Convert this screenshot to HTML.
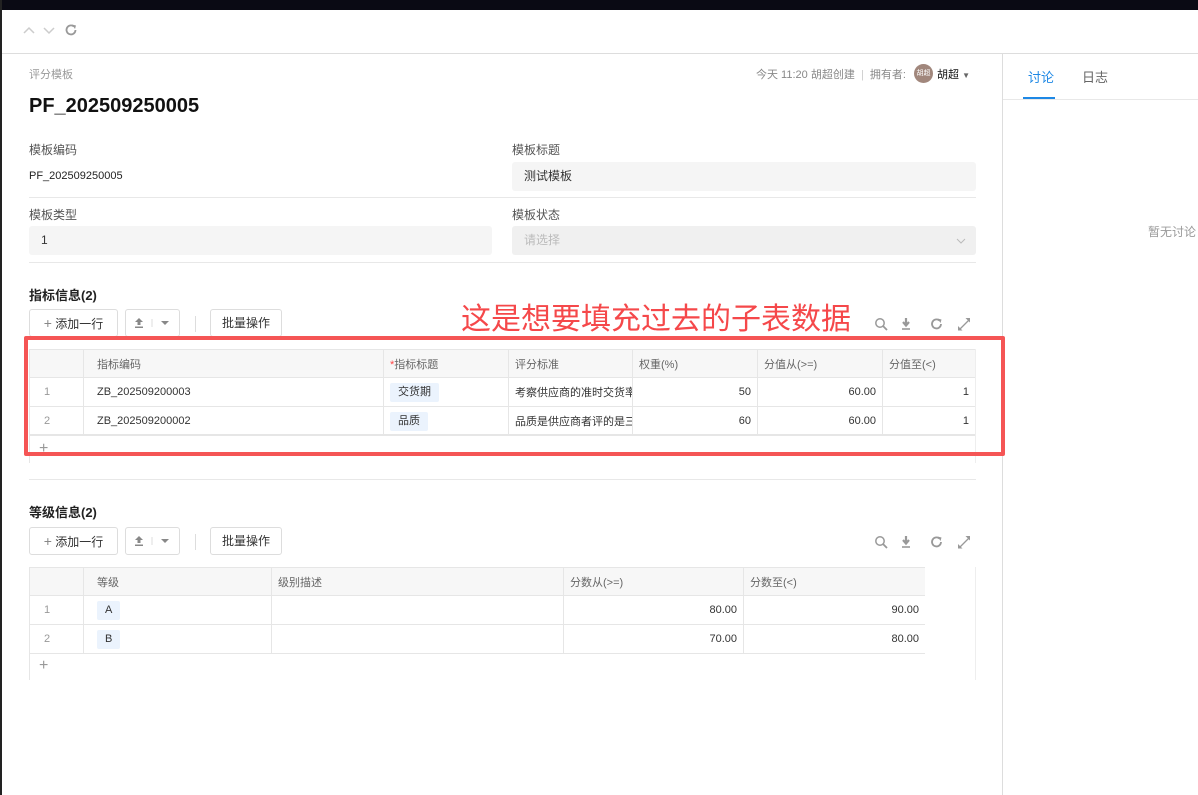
<!DOCTYPE html>
<html><head><meta charset="utf-8"><style>
*{box-sizing:border-box;margin:0;padding:0}
body{width:1198px;height:795px;overflow:hidden;background:#fff;font-family:"Liberation Sans","Noto Sans CJK SC",sans-serif;font-size:12px;color:#333;position:relative}
.a{position:absolute;white-space:nowrap}
.lab{color:#555;font-size:12px}
.inp{position:absolute;background:#f5f5f5;border-radius:3px;height:29px;line-height:29px;padding-left:12px;font-size:12px}
.btn{position:absolute;border:1px solid #ddd;border-radius:3px;height:28px;line-height:26px;text-align:center;font-size:12px;color:#333;background:#fff}
.hl{position:absolute;height:1px;background:#e8e8e8}
.wrap{position:absolute;overflow:hidden}
table{border-collapse:collapse;font-size:11px;table-layout:fixed}
td{border:1px solid #e6e6e6;height:29px;padding:0 6px;white-space:nowrap;overflow:hidden}
tr.h td{background:#f7f7f7;color:#666;height:28px}
.tag{display:inline-block;background:#ebf3fd;padding:0 8px;height:19px;line-height:19px;border-radius:2px}
.r{text-align:right}
.ic{position:absolute}
</style></head><body>
<div class="a" style="left:0;top:0;width:1198px;height:10px;background:#0a0a14"></div>
<div class="a" style="left:0;top:0;width:2px;height:795px;background:#222"></div>
<svg class="a" style="left:22px;top:24px" width="36" height="12" viewBox="0 0 36 12"><path d="M2 9L7 4 12 9" fill="none" stroke="#ccc" stroke-width="1.5"/><path d="M22 4L27 9 32 4" fill="none" stroke="#ccc" stroke-width="1.5"/></svg>
<svg class="a" style="left:64px;top:23px" width="14" height="14" viewBox="0 0 14 14"><path d="M11.5 7A4.5 4.5 0 1 1 9.8 3.4" fill="none" stroke="#999" stroke-width="1.8"/><path d="M8 1.5L12 2.5 11 6z" fill="#999"/></svg>
<div class="hl" style="left:2px;top:53px;width:1196px;background:#ddd"></div>
<div class="a" style="left:1002px;top:53px;width:1px;height:742px;background:#ddd"></div>
<div class="a" style="left:1028px;top:67px;color:#1e88e5;font-size:13px">讨论</div>
<div class="a" style="left:1082px;top:67px;color:#666;font-size:13px">日志</div>
<div class="a" style="left:1023px;top:97px;width:32px;height:2px;background:#1e88e5"></div>
<div class="hl" style="left:1003px;top:99px;width:195px;background:#e8e8e8"></div>
<div class="a" style="left:1148px;top:223px;color:#999">暂无讨论</div>

<div class="a" style="left:29px;top:66px;color:#999;font-size:11px">评分模板</div>
<div class="a" style="left:756px;top:66px;color:#888;font-size:11px">今天 11:20 胡超创建 &nbsp;<span style="color:#ccc">|</span>&nbsp; 拥有者:</div>
<div class="a" style="left:914px;top:64px;width:19px;height:19px;border-radius:50%;background:#a1877c;color:#fff;font-size:7px;line-height:19px;text-align:center">胡超</div>
<div class="a" style="left:937px;top:66px;color:#111;font-size:11px">胡超 <span style="font-size:8px;color:#666">▼</span></div>
<div class="a" style="left:29px;top:95px;font-size:20px;font-weight:bold;color:#111">PF_202509250005</div>

<div class="a lab" style="left:29px;top:141px">模板编码</div>
<div class="a" style="left:29px;top:170px;font-size:11px;color:#222">PF_202509250005</div>
<div class="a lab" style="left:512px;top:141px">模板标题</div>
<div class="inp" style="left:512px;top:162px;width:464px">测试模板</div>
<div class="hl" style="left:29px;top:197px;width:947px"></div>
<div class="a lab" style="left:29px;top:206px">模板类型</div>
<div class="inp" style="left:29px;top:226px;width:463px">1</div>
<div class="a lab" style="left:512px;top:206px">模板状态</div>
<div class="inp" style="left:512px;top:226px;width:464px;background:#f0f0f0;color:#bbb">请选择<svg style="position:absolute;right:10px;top:12px" width="10" height="6" viewBox="0 0 10 6"><path d="M1 1L5 5 9 1" fill="none" stroke="#bbb"/></svg></div>
<div class="hl" style="left:29px;top:262px;width:947px"></div>

<div class="a" style="left:29px;top:285px;font-weight:bold;font-size:13px;color:#222">指标信息(2)</div>
<div class="btn" style="left:29px;top:309px;width:89px"><span style="color:#888;font-size:14px">+</span> 添加一行</div>
<div class="btn" style="left:125px;top:309px;width:55px"><svg style="margin-top:8px" width="40" height="10" viewBox="0 0 40 10"><path d="M6 0L10 4H7.5V7H4.5V4H2z M2 8.5H10V10H2z" fill="#888"/><path d="M19 1V9" stroke="#ddd"/><path d="M28 3H36L32 7z" fill="#888"/></svg></div>
<div class="a" style="left:195px;top:316px;width:1px;height:16px;background:#ddd"></div>
<div class="btn" style="left:210px;top:309px;width:72px">批量操作</div>
<div class="a" style="left:461px;top:294px;color:#f5484a;font-size:30px">这是想要填充过去的子表数据</div>
<svg class="ic" style="left:874px;top:317px" width="100" height="14" viewBox="0 0 100 14"><circle cx="6" cy="6" r="4.2" fill="none" stroke="#999" stroke-width="1.5"/><path d="M9 9L13 13" stroke="#999" stroke-width="1.8"/><path d="M32 1V7M29 5L32 8.5 35 5" fill="none" stroke="#999" stroke-width="2.2"/><path d="M28 12H36" stroke="#999" stroke-width="1.6"/><path d="M67 7A4.5 4.5 0 1 1 65.3 3.4" fill="none" stroke="#999" stroke-width="1.8"/><path d="M63.5 1.5L67.5 2.5 66.5 6z" fill="#999"/><path d="M85 13L90 8M95 3L90 8" stroke="#999" stroke-width="1.3"/><path d="M84 9V13.5H88.5z M96 1H91.5L96 5.5z" fill="#999"/></svg>
<div class="wrap" style="left:29px;top:349px;width:947px;height:115px">
<table style="width:980px">
<colgroup><col style="width:54px"><col style="width:300px"><col style="width:125px"><col style="width:124px"><col style="width:125px"><col style="width:125px"><col style="width:127px"></colgroup>
<tr class="h"><td></td><td style="padding-left:13px">指标编码</td><td><span style="color:#f44">*</span>指标标题</td><td>评分标准</td><td>权重(%)</td><td>分值从(>=)</td><td>分值至(<)</td></tr>
<tr><td style="color:#999;padding-left:14px">1</td><td style="padding-left:13px">ZB_202509200003</td><td><span class="tag">交货期</span></td><td style="text-overflow:clip">考察供应商的准时交货率</td><td class="r">50</td><td class="r">60.00</td><td class="r" style="padding-right:40px">1</td></tr>
<tr><td style="color:#999;padding-left:14px">2</td><td style="padding-left:13px">ZB_202509200002</td><td><span class="tag">品质</span></td><td>品质是供应商者评的是三</td><td class="r">60</td><td class="r">60.00</td><td class="r" style="padding-right:40px">1</td></tr>
</table>
</div>
<div class="hl" style="left:29px;top:434px;width:947px;background:#e6e6e6"></div>
<div class="a" style="left:29px;top:434px;width:1px;height:29px;background:#e6e6e6"></div>
<div class="a" style="left:39px;top:440px;color:#999;font-size:16px">+</div>
<div class="a" style="left:975px;top:349px;width:1px;height:114px;background:#eee"></div>
<div class="a" style="left:24px;top:336px;width:981px;height:120px;border:4px solid #f55555;border-radius:2px"></div>
<div class="hl" style="left:29px;top:479px;width:947px"></div>

<div class="a" style="left:29px;top:502px;font-weight:bold;font-size:13px;color:#222">等级信息(2)</div>
<div class="btn" style="left:29px;top:527px;width:89px"><span style="color:#888;font-size:14px">+</span> 添加一行</div>
<div class="btn" style="left:125px;top:527px;width:55px"><svg style="margin-top:8px" width="40" height="10" viewBox="0 0 40 10"><path d="M6 0L10 4H7.5V7H4.5V4H2z M2 8.5H10V10H2z" fill="#888"/><path d="M19 1V9" stroke="#ddd"/><path d="M28 3H36L32 7z" fill="#888"/></svg></div>
<div class="a" style="left:195px;top:534px;width:1px;height:16px;background:#ddd"></div>
<div class="btn" style="left:210px;top:527px;width:72px">批量操作</div>
<svg class="ic" style="left:874px;top:535px" width="100" height="14" viewBox="0 0 100 14"><circle cx="6" cy="6" r="4.2" fill="none" stroke="#999" stroke-width="1.5"/><path d="M9 9L13 13" stroke="#999" stroke-width="1.8"/><path d="M32 1V7M29 5L32 8.5 35 5" fill="none" stroke="#999" stroke-width="2.2"/><path d="M28 12H36" stroke="#999" stroke-width="1.6"/><path d="M67 7A4.5 4.5 0 1 1 65.3 3.4" fill="none" stroke="#999" stroke-width="1.8"/><path d="M63.5 1.5L67.5 2.5 66.5 6z" fill="#999"/><path d="M85 13L90 8M95 3L90 8" stroke="#999" stroke-width="1.3"/><path d="M84 9V13.5H88.5z M96 1H91.5L96 5.5z" fill="#999"/></svg>
<div class="wrap" style="left:29px;top:567px;width:896px;height:90px">
<table style="width:896px">
<colgroup><col style="width:54px"><col style="width:188px"><col style="width:292px"><col style="width:180px"><col style="width:182px"></colgroup>
<tr class="h"><td></td><td style="padding-left:13px">等级</td><td>级别描述</td><td>分数从(>=)</td><td>分数至(<)</td></tr>
<tr><td style="color:#999;padding-left:14px">1</td><td style="padding-left:13px"><span class="tag">A</span></td><td></td><td class="r">80.00</td><td class="r">90.00</td></tr>
<tr><td style="color:#999;padding-left:14px">2</td><td style="padding-left:13px"><span class="tag">B</span></td><td></td><td class="r">70.00</td><td class="r">80.00</td></tr>
</table>
</div>
<div class="a" style="left:29px;top:652px;width:1px;height:28px;background:#e6e6e6"></div>
<div class="a" style="left:39px;top:657px;color:#999;font-size:16px">+</div>
<div class="a" style="left:975px;top:567px;width:1px;height:113px;background:#eee"></div>
</body></html>
